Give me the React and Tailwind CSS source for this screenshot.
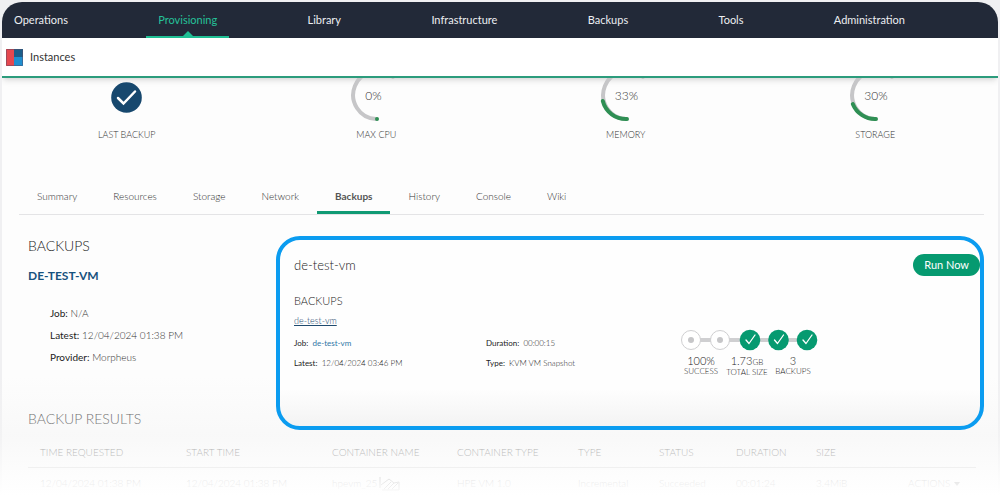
import React from "react";

const navItems = [
  "Operations",
  "Provisioning",
  "Library",
  "Infrastructure",
  "Backups",
  "Tools",
  "Administration",
];

const tabs = [
  "Summary",
  "Resources",
  "Storage",
  "Network",
  "Backups",
  "History",
  "Console",
  "Wiki",
];

const gauges = [
  { label: "MAX CPU", value: "0%", arc: "M29 41 L29 41" },
  { label: "MEMORY", value: "33%", arc: "M29 41 A24 24 0 0 1 4.8 23" },
  { label: "STORAGE", value: "30%", arc: "M29 41 A24 24 0 0 1 5.8 26" },
];

const columns = [
  { title: "TIME REQUESTED", width: "w-[146px]" },
  { title: "START TIME", width: "w-[146px]" },
  { title: "CONTAINER NAME", width: "w-[125px]" },
  { title: "CONTAINER TYPE", width: "w-[121px]" },
  { title: "TYPE", width: "w-[81px]" },
  { title: "STATUS", width: "w-[77px]" },
  { title: "DURATION", width: "w-[80px]" },
  { title: "SIZE", width: "w-[92px]" },
];

const TopNav = () => (
  <nav className="flex h-9 justify-between bg-[#222938] pr-[81px] text-[11px] font-normal text-[#eceef2]">
    {navItems.map((item) => {
      const active = item === "Provisioning";
      return (
        <a
          key={item}
          href="#"
          className={`relative flex items-center px-3 ${
            active ? "border-y-2 border-t-transparent border-b-[#1fbf94] text-[#25c299]" : ""
          }`}
        >
          {item}
          {active && (
            <svg
              className="absolute bottom-0 left-1/2 -translate-x-1/2"
              width="10"
              height="5"
              viewBox="0 0 10 5"
            >
              <path d="M0 5 L5 0 L10 5 Z" fill="#1fbf94" />
            </svg>
          )}
        </a>
      );
    })}
  </nav>
);

const Gauge = ({ label, value, arc }) => (
  <div className="flex flex-col items-center">
    <div className="grid h-11 w-14 grid-cols-1 grid-rows-1">
      <svg
        className="col-start-1 row-start-1"
        width="56"
        height="44"
        viewBox="0 0 56 44"
        fill="none"
        strokeWidth="4"
      >
        <path d="M45 -1 A24 24 0 1 0 28 41" stroke="#c6c6c8" strokeLinecap="round" />
        <path d={arc} stroke="#2f8f54" strokeLinecap="round" />
      </svg>
      <span className="col-start-1 row-start-1 pt-2.5 pl-[17px] text-xs leading-4 text-[#333]">
        {value}
      </span>
    </div>
    <span className="mt-2 text-[9px] leading-[10px] text-[#333]">{label}</span>
  </div>
);

const Stats = () => (
  <div className="grid grid-cols-4 gap-1 pl-0.5">
    <div className="flex flex-col items-center">
      <div className="h-11 pt-1">
        <svg width="31" height="31" viewBox="0 0 31 31" fill="none">
          <circle cx="15.5" cy="15.5" r="15.3" fill="#17486e" />
          <path
            d="M7 16 L12.500 21.500 L24 9.500"
            stroke="#fff"
            strokeWidth="2.500"
            strokeLinecap="round"
          />
        </svg>
      </div>
      <span className="mt-2 text-[9px] leading-[10px] text-[#333]">LAST BACKUP</span>
    </div>
    {gauges.map((g) => (
      <Gauge key={g.label} {...g} />
    ))}
  </div>
);

const Tabs = () => (
  <div className="mt-[38px] mr-3.5 ml-[17px] flex border-b border-[#e4e4e6]">
    {tabs.map((tab) => (
      <button
        key={tab}
        type="button"
        className={`h-9 border-y-3 border-t-transparent px-[18px] text-[10px] ${
          tab === "Backups"
            ? "border-b-[#109a74] font-bold text-[#555]"
            : "border-b-transparent text-[#333]"
        }`}
      >
        {tab}
      </button>
    ))}
  </div>
);

const Field = ({ name, children }) => (
  <p>
    <span className="font-normal text-[#222]">{name}:</span> {children}
  </p>
);

// last five runs: pending ones are hollow, finished ones get a tick
const RunHistory = () => (
  <svg width="138" height="22" viewBox="0 0 138 22" fill="none">
    <path d="M11 11 H127" stroke="#cfcfd1" strokeWidth="4" />
    {[11, 40].map((x) => (
      <g key={x}>
        <circle cx={x} cy="11" r="9.5" fill="#fff" stroke="#cfcfd1" />
        <circle cx={x} cy="11" r="3" fill="#c6c6c8" />
      </g>
    ))}
    {[70, 98.5, 127].map((x) => (
      <g key={x} transform={`translate(${x} 11)`}>
        <circle r="10.3" fill="#069a70" />
        <path
          d="M-4 0 L-1 3.500 L5 -5"
          stroke="#fff"
          strokeWidth="1.300"
          strokeLinecap="round"
          strokeLinejoin="round"
        />
      </g>
    ))}
  </svg>
);

const BackupPanel = () => (
  <section className="relative z-20 h-[194px] rounded-3xl border-4 border-[#0b9cf0] bg-linear-to-b from-[#fefefe] from-80% to-[#f3f3f3] pl-3.5">
    <div className="flex items-center justify-between pt-3.5">
      <h2 className="text-[13px] leading-5 text-[#222]">de-test-vm</h2>
      <button
        type="button"
        className="h-[22px] rounded-full bg-[#069a70] px-[11px] text-[11px] font-normal text-white"
      >
        Run Now
      </button>
    </div>
    <h3 className="mt-[17px] text-[11px] leading-4 text-[#222]">BACKUPS</h3>
    <a href="#" className="mt-1 block w-fit text-[9px] leading-4 text-[#1f4a6e] underline">
      de-test-vm
    </a>
    <div className="flex text-[8px] leading-5 text-[#222]">
      <div className="w-48 pt-1">
        <Field name="Job">
          <a href="#" className="ml-0.5 font-normal text-[#2f76a6]">
            de-test-vm
          </a>
        </Field>
        <Field name="Latest">
          <span className="ml-0.5">12/04/2024 03:46 PM</span>
        </Field>
      </div>
      <div className="w-[194px] pt-1">
        <Field name="Duration">
          <span className="ml-0.5">00:00:15</span>
        </Field>
        <Field name="Type">
          <span className="ml-0.5">KVM VM Snapshot</span>
        </Field>
      </div>
      <div>
        <RunHistory />
        <div className="mt-1 -ml-0.5 grid w-[138px] grid-cols-3 text-center text-[8px] leading-[9px] whitespace-nowrap">
          <div>
            <p className="text-[11px] leading-3">100%</p>
            SUCCESS
          </div>
          <div>
            <p className="text-[11px] leading-3">
              1.73<span className="text-[8px]">GB</span>
            </p>
            TOTAL SIZE
          </div>
          <div>
            <p className="text-[11px] leading-3">3</p>
            BACKUPS
          </div>
        </div>
      </div>
    </div>
  </section>
);

const ResultsTable = () => (
  <table className="mt-2 mr-[22px] ml-[26px] table-fixed text-left text-[10px] text-[#333]">
    <thead>
      <tr className="h-[29px] border-b border-[#c4c4c6]">
        {columns.map((c) => (
          <th key={c.title} className={`px-3 font-light whitespace-nowrap ${c.width}`}>
            {c.title}
          </th>
        ))}
        <th className="w-20" aria-label="Actions" />
      </tr>
    </thead>
    <tbody>
      <tr className="h-[29px] whitespace-nowrap">
        <td className="px-3 pt-1">12/04/2024 01:38 PM</td>
        <td className="px-3 pt-1">12/04/2024 01:38 PM</td>
        <td className="px-3 pt-1">
          <span className="flex items-center">
            hpevm_25
            <svg
              className="ml-0.5"
              width="22"
              height="14"
              viewBox="0 0 22 14"
              fill="none"
              stroke="currentColor"
            >
              <path d="M1 0 V11 M2 8 L10 2 L15 6 L20 5 V13 H3 M5 12 L12 5 M9 12 L15 6 M13 12 L19 6" />
            </svg>
          </span>
        </td>
        <td className="px-3 pt-1">HPE VM 1.0</td>
        <td className="px-3 pt-1">Incremental</td>
        <td className="px-3 pt-1">Succeeded</td>
        <td className="px-3 pt-1">00:01:24</td>
        <td className="px-3 pt-1">3.4MiB</td>
        <td className="pt-1 pl-3">
          <button type="button" className="flex items-center gap-1">
            ACTIONS
            <svg width="6" height="4" viewBox="0 0 6 4">
              <path d="M0 0 H6 L3 4 Z" fill="currentColor" />
            </svg>
          </button>
        </td>
      </tr>
    </tbody>
  </table>
);

const App = () => {
  return (
    <div className="relative min-h-screen overflow-hidden bg-[#f0f0f2] px-0.5 pt-0.5 font-['Lato','Open_Sans',sans-serif] font-light">
      <div className="min-h-[calc(100vh-2px)] overflow-hidden rounded-t-[20px] bg-[#fdfdfd]">
        <header>
          <TopNav />
          <div className="flex h-10 items-center gap-[7px] border-b-2 border-[#2c9c7c] bg-white pl-1 shadow-md">
            <svg width="17" height="17" viewBox="0 0 17 17">
              <rect width="9" height="17" fill="#e5484f" />
              <rect x="8" width="9" height="9" fill="#1b5e8a" />
              <rect x="8" y="8" width="9" height="9" fill="#1f8fd0" />
              <rect x="0.500" y="0.500" width="16" height="16" rx="1" fill="none" stroke="#5a4a63" strokeOpacity="0.5" />
            </svg>
            <span className="text-[11px] font-normal text-[#333]">Instances</span>
          </div>
        </header>

        <main>
          <Stats />
          <Tabs />
          <div className="mt-[21px] grid grid-cols-[248px_1fr] pr-3.5 pl-[26px]">
            <div>
              <h1 className="text-sm leading-5 text-[#222]">BACKUPS</h1>
              <h2 className="mt-2.5 text-xs leading-5 font-bold text-[#17527e]">
                DE-TEST-VM
              </h2>
              <div className="mt-4 pl-[22px] text-[10px] leading-[22px] text-[#333]">
                <Field name="Job">N/A</Field>
                <Field name="Latest">12/04/2024 01:38 PM</Field>
                <Field name="Provider">Morpheus</Field>
              </div>
              <h2 className="mt-[41px] text-sm leading-5 text-[#222]">BACKUP RESULTS</h2>
            </div>
            <BackupPanel />
          </div>
          <ResultsTable />
        </main>
      </div>

      {/* fade out towards the bottom of the page */}
      <div className="pointer-events-none absolute inset-x-0 bottom-0 z-10 h-[120px] bg-linear-to-b from-transparent via-[#f5f5f5]/55 via-50% to-white" />
    </div>
  );
};

export default App;
